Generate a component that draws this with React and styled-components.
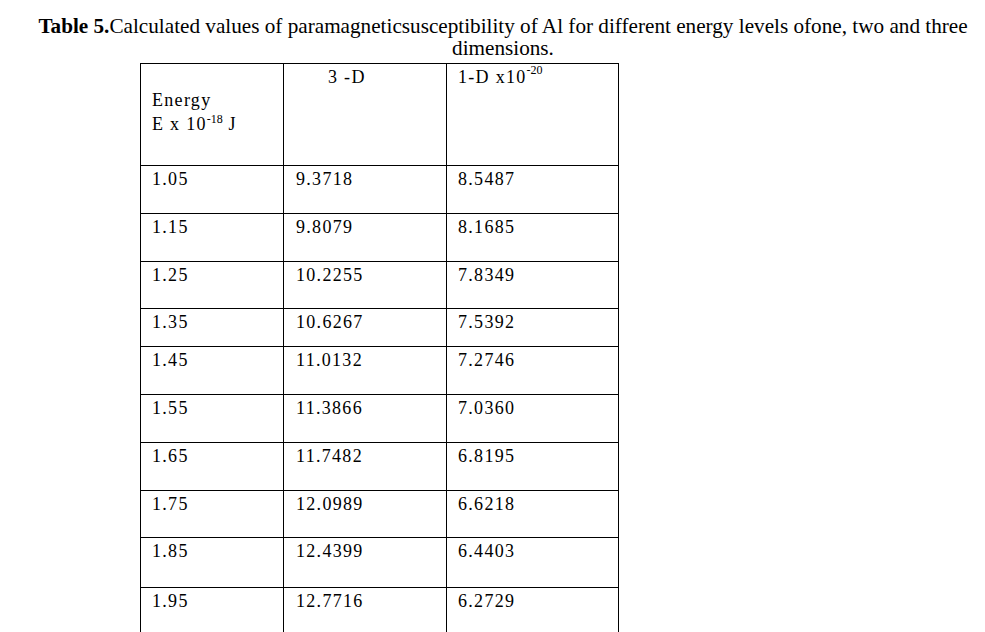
import React from "react";
import styled, { createGlobalStyle } from "styled-components";

const Global = createGlobalStyle`
  html, body { margin: 0; padding: 0; background: #fff; }
  body { font-family: "Liberation Serif", "Times New Roman", serif; color: #000; }
`;

const Page = styled.div`
  width: 985px;
  height: 632px;
  box-sizing: border-box;
  padding: 15px 9px 0 30px;
  overflow: hidden;
`;

const Caption = styled.p`
  margin: 0;
  text-align: center;
  font-size: 21.2px;
  line-height: 22px;
`;

const Bold = styled.b`
  font-weight: bold;
`;

const Grid = styled.div`
  display: grid;
  grid-template-columns: 143px 163px 172px;
  grid-template-rows: ${(p) => p.$rows};
  width: max-content;
  margin: 4px 0 0 110px;
  border-top: 1px solid #000;
  border-left: 1px solid #000;
`;

const Cell = styled.div`
  box-sizing: border-box;
  border-right: 1px solid #000;
  border-bottom: 1px solid #000;
  padding: ${(p) => p.$pt || 3}px 0 0 ${(p) => p.$pl || 11}px;
  font-size: 18px;
  line-height: 20px;
  letter-spacing: 1.3px;
  white-space: nowrap;
`;

const Line = styled.div`
  height: 24px;
  line-height: 24px;
`;

const Sup = styled.sup`
  font-size: 12px;
  line-height: 0;
  vertical-align: ${(p) => p.$up || 7}px;
  letter-spacing: 0;
`;

const rows = [
  ["1.05", "9.3718", "8.5487"],
  ["1.15", "9.8079", "8.1685"],
  ["1.25", "10.2255", "7.8349"],
  ["1.35", "10.6267", "7.5392"],
  ["1.45", "11.0132", "7.2746"],
  ["1.55", "11.3866", "7.0360"],
  ["1.65", "11.7482", "6.8195"],
  ["1.75", "12.0989", "6.6218"],
  ["1.85", "12.4399", "6.4403"],
  ["1.95", "12.7716", "6.2729"],
];

const heights = [102, 48, 48, 47, 38, 48, 48, 48, 47, 50, 50];

export default function App() {
  return (
    <>
      <Global />
      <Page>
        <Caption>
          <Bold>Table 5.</Bold>Calculated values of paramagneticsusceptibility of Al for different energy levels ofone, two and three dimensions.
        </Caption>
        <Grid $rows={heights.map((h) => h + "px").join(" ")}>
          <Cell $pt={24}>
            <Line>Energy</Line>
            <Line>
              E x 10<Sup $up={7}>-18</Sup> J
            </Line>
          </Cell>
          <Cell $pl={44}>3 -D</Cell>
          <Cell>
            1-D x10<Sup $up={9}>-20</Sup>
          </Cell>
          {rows.map((r) =>
            r.map((v, i) => (
              <Cell key={r[0] + i} $pl={i === 1 ? 12 : 11}>
                {v}
              </Cell>
            ))
          )}
        </Grid>
      </Page>
    </>
  );
}
